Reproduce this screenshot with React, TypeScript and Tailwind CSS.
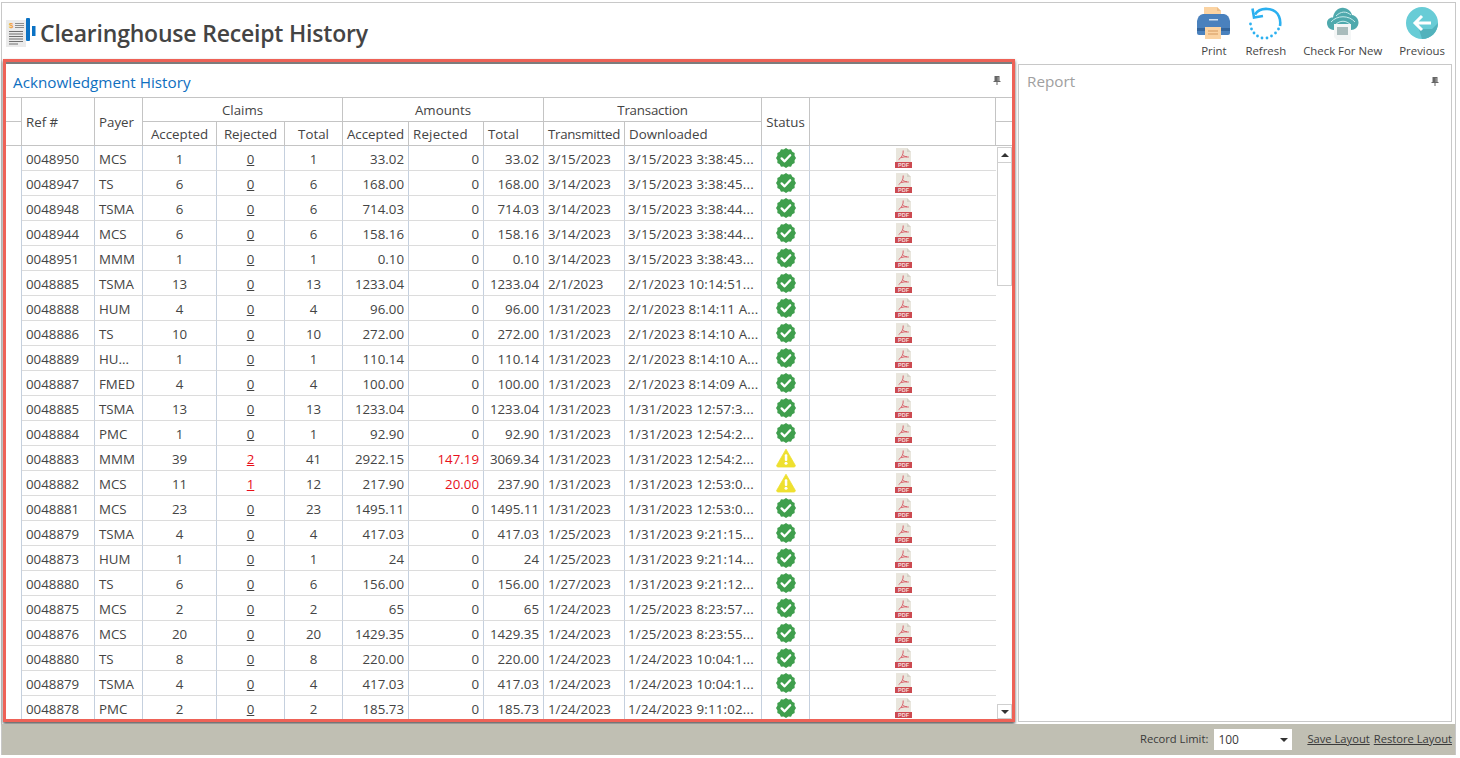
import React from "react";

type Row = [string, string, string, string, string, string, string, string, string, string];
const rows: Row[] = [
  ["0048950","MCS","1","0","1","33.02","0","33.02","3/15/2023","3/15/2023 3:38:45..."],
  ["0048947","TS","6","0","6","168.00","0","168.00","3/14/2023","3/15/2023 3:38:45..."],
  ["0048948","TSMA","6","0","6","714.03","0","714.03","3/14/2023","3/15/2023 3:38:44..."],
  ["0048944","MCS","6","0","6","158.16","0","158.16","3/14/2023","3/15/2023 3:38:44..."],
  ["0048951","MMM","1","0","1","0.10","0","0.10","3/14/2023","3/15/2023 3:38:43..."],
  ["0048885","TSMA","13","0","13","1233.04","0","1233.04","2/1/2023","2/1/2023 10:14:51..."],
  ["0048888","HUM","4","0","4","96.00","0","96.00","1/31/2023","2/1/2023 8:14:11 A..."],
  ["0048886","TS","10","0","10","272.00","0","272.00","1/31/2023","2/1/2023 8:14:10 A..."],
  ["0048889","HU...","1","0","1","110.14","0","110.14","1/31/2023","2/1/2023 8:14:10 A..."],
  ["0048887","FMED","4","0","4","100.00","0","100.00","1/31/2023","2/1/2023 8:14:09 A..."],
  ["0048885","TSMA","13","0","13","1233.04","0","1233.04","1/31/2023","1/31/2023 12:57:3..."],
  ["0048884","PMC","1","0","1","92.90","0","92.90","1/31/2023","1/31/2023 12:54:2..."],
  ["0048883","MMM","39","2","41","2922.15","147.19","3069.34","1/31/2023","1/31/2023 12:54:2..."],
  ["0048882","MCS","11","1","12","217.90","20.00","237.90","1/31/2023","1/31/2023 12:53:0..."],
  ["0048881","MCS","23","0","23","1495.11","0","1495.11","1/31/2023","1/31/2023 12:53:0..."],
  ["0048879","TSMA","4","0","4","417.03","0","417.03","1/25/2023","1/31/2023 9:21:15..."],
  ["0048873","HUM","1","0","1","24","0","24","1/25/2023","1/31/2023 9:21:14..."],
  ["0048880","TS","6","0","6","156.00","0","156.00","1/27/2023","1/31/2023 9:21:12..."],
  ["0048875","MCS","2","0","2","65","0","65","1/24/2023","1/25/2023 8:23:57..."],
  ["0048876","MCS","20","0","20","1429.35","0","1429.35","1/24/2023","1/25/2023 8:23:55..."],
  ["0048880","TS","8","0","8","220.00","0","220.00","1/24/2023","1/24/2023 10:04:1..."],
  ["0048879","TSMA","4","0","4","417.03","0","417.03","1/24/2023","1/24/2023 10:04:1..."],
  ["0048878","PMC","2","0","2","185.73","0","185.73","1/24/2023","1/24/2023 9:11:02..."],
];

const badgePoints = (() => {
  const p: string[] = [];
  for (let i = 0; i < 24; i++) {
    const r = i % 2 === 0 ? 10 : 8.9;
    const a = (i * Math.PI) / 12;
    p.push(`${(10 + r * Math.cos(a)).toFixed(2)},${(10 + r * Math.sin(a)).toFixed(2)}`);
  }
  return p.join(" ");
})();

function CheckBadge() {
  return (
    <svg width="20" height="20" viewBox="0 0 20 20">
      <polygon points={badgePoints} fill="#3f9f4d" />
      <path d="M5.6 10.4l3 2.9 5.6-6" fill="none" stroke="#fff" strokeWidth="2.3" strokeLinecap="round" strokeLinejoin="round" />
    </svg>
  );
}

function Warn() {
  return (
    <svg width="20" height="20" viewBox="0 0 20 20">
      <path d="M10 1.2 L19.2 17.2 Q19.6 19 18 19 L2 19 Q0.4 19 0.8 17.2 Z" fill="#eee02f" stroke="#eee02f" strokeWidth="0.8" strokeLinejoin="round" />
      <rect x="8.8" y="6.2" width="2.5" height="6.8" rx="1" fill="#fff" />
      <circle cx="10" cy="15.3" r="1.5" fill="#fff" />
    </svg>
  );
}

function Pdf() {
  return (
    <svg width="17" height="20" viewBox="0 0 17 20">
      <path d="M1 0H12L16 4V14H1Z" fill="#e9e6dd" />
      <path d="M12 0L16 4H12Z" fill="#d6d3c8" />
      <path d="M8.2 2.5C8.6 6 6.5 10 3.6 11.6M8.2 7.4C9.8 8.6 11.8 9.2 13.8 9M6.2 9.6C8.2 9 10 8.7 12 8.7" fill="none" stroke="#d9606a" strokeWidth="1" />
      <rect x="0" y="14" width="17" height="6" fill="#cc4a50" />
      <text x="8.5" y="19" textAnchor="middle" fontSize="5.5" fontWeight="700" fill="#f4dcdc" fontFamily="'Liberation Sans',sans-serif">PDF</text>
    </svg>
  );
}

function Pin() {
  return (
    <svg width="8" height="9" viewBox="0 0 8 9">
      <path d="M1.5 0H6.5V5H7.500V6H4.500V9H3.500V6H0.500V5H1.500Z" fill="#666" />
      <rect x="4.6" y="1" width="1" height="4" fill="#aaa" />
    </svg>
  );
}

function TitleIcon() {
  return (
    <svg width="30" height="30" viewBox="0 0 30 30">
      <path d="M0 2H20V29H0Z" fill="#ebebeb" />
      <text x="3" y="10" fontSize="8" fontWeight="700" fill="#f2a33a" fontFamily="'Liberation Sans',sans-serif">$</text>
      <path d="M9 5.500H18M9 7.500H18M9 9.500H18" stroke="#8d8d8d" strokeWidth="1" />
      <path d="M3 13.500H17M3 16H17M3 18.500H17M3 21H17M3 23.500H17M3 26H12" stroke="#707070" strokeWidth="1" />
      <rect x="20" y="0" width="4" height="23" rx="1" fill="#0b72c4" />
      <rect x="26" y="8" width="3.500" height="10" fill="#0b72c4" />
    </svg>
  );
}

function PrintIcon() {
  return (
    <svg width="33" height="33" viewBox="0 0 33 33">
      <path d="M7 0H20L24 4V14H7Z" fill="#fbd3a2" />
      <path d="M20 0L24 4H20Z" fill="#eebd87" />
      <path d="M6 7H27Q32 8 33 14V26Q33 28 31 28H2Q0 28 0 26V14Q1 8 6 7Z" fill="#4a81bd" />
      <rect x="0" y="21" width="33" height="3" fill="#33659c" />
      <rect x="12" y="12" width="9" height="1.500" fill="#cfe0f0" />
      <path d="M8 20H24V32H8Z" fill="#fbd3a2" />
      <path d="M11 24H21M11 27H21" stroke="#d69a5e" strokeWidth="1.200" />
    </svg>
  );
}

function RefreshIcon() {
  const dots: [number, number][] = [[1.5,17],[2.5,22],[5,26],[8.5,29],[13,31],[18,31],[22.5,29],[26.5,26],[29.5,22]];
  return (
    <svg width="33" height="33" viewBox="0 0 33 33">
      <path d="M6 7.500C11-0.500 26 0 30 9.500C31.500 13 31.500 16 31 19" fill="none" stroke="#2bb0f0" strokeWidth="2.600" />
      <path d="M3.500 1.500L5 10.500L14 9" fill="none" stroke="#2bb0f0" strokeWidth="2.600" />
      {dots.map(([x, y], i) => (
        <circle key={i} cx={x} cy={y} r="1.400" fill="#2bb0f0" />
      ))}
    </svg>
  );
}

function CloudIcon() {
  return (
    <svg width="32" height="33" viewBox="0 0 32 33">
      <path d="M7 23C2 23 0 19 0 16C0 12.500 3 10 6 10.500C7 4 12 0 17 1C21 1.500 24 4 25 8C29 8.500 31.500 12 31.500 15.500C31.500 20 28 23 24 23Z" fill="#4fa9ad" />
      <path d="M4 15C10 8 22 8 28 15M8 18C13 13 19 13 24 18M9 9C14 4 19 4 24 8" fill="none" stroke="#c9ecec" strokeWidth="1" />
      <path d="M7 17H24V33H10L7 30Z" fill="#f4f6f6" />
      <rect x="10" y="20" width="11" height="8" fill="#a9bcbc" />
    </svg>
  );
}

function PrevIcon() {
  return (
    <svg width="32" height="32" viewBox="0 0 32 32">
      <circle cx="16" cy="16" r="16" fill="#68ccd6" />
      <path d="M11 16L17 22H26L32 16C32 25 25 32 16 32Z" fill="#52b2bc" />
      <path d="M16 9L9 16L16 23M9.500 16H25" fill="none" stroke="#fff" strokeWidth="3" />
    </svg>
  );
}

const hCell = "border-r border-b border-[#c4c4c4] flex items-center justify-center pt-[2px]";
const bLine = "border-r border-b-[1px] border-r-[#c5d0de] border-b-[#dcdcdc] h-[25px] flex items-center";
const bText = `${bLine} pt-[1px]`;

function ToolBtn({ icon, label }: { icon: React.ReactNode; label: string }) {
  return (
    <div className="flex flex-col items-center">
      <div className="h-[36px] flex items-start">{icon}</div>
      <span className="text-[11.4px] leading-[16px] text-[#444] whitespace-nowrap">{label}</span>
    </div>
  );
}

export default function App() {
  return (
    <div className="w-[1460px] h-[758px] bg-white overflow-hidden pt-[2px] pl-[1px] font-['Open_Sans',sans-serif] text-[#444]">
      <div className="w-[1455px] h-[753px] border-t border-l border-r border-[#c8c8c8] flex flex-col">
        <div className="h-[56px] flex items-start justify-between">
          <div className="flex items-center pl-[4px] pt-[14px]">
            <TitleIcon />
            <span className="ml-[4px] text-[23px] leading-[32px] font-semibold text-[#444] tracking-[-0.2px] whitespace-nowrap">Clearinghouse Receipt History</span>
          </div>
          <div className="flex items-start pr-[10px] pt-[4px]">
            <ToolBtn icon={<PrintIcon />} label="Print" />
            <div className="ml-[15px]"><ToolBtn icon={<RefreshIcon />} label="Refresh" /></div>
            <div className="ml-[17px]"><ToolBtn icon={<CloudIcon />} label="Check For New" /></div>
            <div className="ml-[17px]"><ToolBtn icon={<PrevIcon />} label="Previous" /></div>
          </div>
        </div>

        <div className="flex items-start h-[665px]">
          <div className="ml-[1px] w-[1012px] h-[663px] border-[3px] border-[#ee6257] bg-white shadow-[0_2px_3px_rgba(0,0,0,0.65)] flex flex-col overflow-hidden">
            <div className="h-[2px] bg-[#7d7d7d] shrink-0" />
            <div className="h-[33px] shrink-0 flex items-center justify-between pl-[7px] pr-[11px]">
              <span className="text-[15.25px] pt-[4px] text-[#0f6fc0]">Acknowledgment History</span>
              <Pin />
            </div>
            <div className="grid grid-cols-[16px_73px_48px_74px_68px_58px_66px_75px_60px_81px_137px_48px_186px_16px] grid-rows-[24px_24px] border-t border-[#c4c4c4] text-[13.3px] shrink-0 h-[49px]">
              <div className={hCell} />
              <div className={`${hCell} row-span-2 !justify-start pl-[4px]`}>Ref #</div>
              <div className={`${hCell} row-span-2 !justify-start pl-[4px]`}>Payer</div>
              <div className={`${hCell} col-span-3`}>Claims</div>
              <div className={`${hCell} col-span-3`}>Amounts</div>
              <div className={`${hCell} col-span-2`}><span className="tracking-[-0.2px]">Transaction</span></div>
              <div className={`${hCell} row-span-2`}>Status</div>
              <div className={`${hCell} row-span-2`} />
              <div className="border-b border-[#c4c4c4]" />
              <div className={hCell} />
              <div className={hCell}>Accepted</div>
              <div className={hCell}>Rejected</div>
              <div className={hCell}>Total</div>
              <div className={hCell}>Accepted</div>
              <div className={`${hCell} !justify-start pl-[4px]`}><span className="tracking-[0.2px]">Rejected</span></div>
              <div className={`${hCell} !justify-start pl-[4px]`}>Total</div>
              <div className={`${hCell} !justify-start pl-[4px]`}><span className="tracking-[-0.3px]">Transmitted</span></div>
              <div className={`${hCell} !justify-start pl-[4px]`}>Downloaded</div>
              <div className="border-b border-[#c4c4c4]" />
            </div>
            <div className="flex items-start flex-1 min-h-0 overflow-hidden">
              <div className="w-[990px] shrink-0">
                {rows.map((r, i) => {
                  const bad = r[3] !== "0";
                  return (
                    <div key={i} className="grid grid-cols-[16px_73px_48px_74px_68px_58px_66px_75px_60px_81px_137px_48px_186px] text-[13.3px] leading-[18px]">
                      <div className="border-r border-r-[#c5d0de] h-[25px]" />
                      <div className={`${bText} pl-[4px]`}>{r[0]}</div>
                      <div className={`${bText} pl-[4px]`}>{r[1]}</div>
                      <div className={`${bText} justify-center`}>{r[2]}</div>
                      <div className={`${bText} justify-center`}>
                        <span className={`underline ${bad ? "text-[#e8101a]" : ""}`}>{r[3]}</span>
                      </div>
                      <div className={`${bText} justify-center`}>{r[4]}</div>
                      <div className={`${bText} justify-end pr-[4px]`}>{r[5]}</div>
                      <div className={`${bText} justify-end pr-[4px] ${bad ? "text-[#e8101a]" : ""}`}>{r[6]}</div>
                      <div className={`${bText} justify-end pr-[4px]`}>{r[7]}</div>
                      <div className={`${bText} pl-[4px]`}>{r[8]}</div>
                      <div className={`${bText} pl-[3px] whitespace-nowrap overflow-hidden tracking-[0.2px]`}>{r[9]}</div>
                      <div className={`${bLine} justify-center`}>{bad ? <Warn /> : <CheckBadge />}</div>
                      <div className="border-b border-b-[#dcdcdc] h-[25px] flex items-center justify-center"><Pdf /></div>
                    </div>
                  );
                })}
              </div>
              <div className="w-[16px] shrink-0 h-[573px] pl-[1px] pt-[1px] flex flex-col">
                <div className="w-[15px] h-[139px] border border-[#cfcfcf] flex flex-col">
                  <div className="h-[15px] border-b border-[#cfcfcf] flex items-center justify-center">
                    <div className="w-0 h-0 border-l-[4px] border-r-[4px] border-b-[4px] border-l-transparent border-r-transparent border-b-[#333]" />
                  </div>
                </div>
                <div className="flex-1" />
                <div className="w-[15px] h-[15px] border border-[#cfcfcf] flex items-center justify-center">
                  <div className="w-0 h-0 border-l-[4px] border-r-[4px] border-t-[4px] border-l-transparent border-r-transparent border-t-[#333]" />
                </div>
              </div>
            </div>
          </div>

          <div className="ml-[3px] mt-[5px] w-[434px] h-[658px] border border-[#c8c8c8] bg-white flex items-start justify-between pl-[8px] pr-[12px] pt-[5px]">
            <span className="text-[15.25px] leading-[22px] text-[#a0a0a0]">Report</span>
            <div className="mt-[7px]"><Pin /></div>
          </div>
        </div>

        <div className="h-[31px] bg-[#c0bfb3] flex items-center justify-end pr-[3px] text-[11.2px] text-[#3a3a3a]">
          <span>Record Limit:</span>
          <div className="ml-[6px] w-[78px] h-[21px] bg-white flex items-center justify-between pl-[4px] pr-[4px] text-[12px]">
            <span>100</span>
            <div className="w-0 h-0 border-l-[4px] border-r-[4px] border-t-[4px] border-l-transparent border-r-transparent border-t-[#333]" />
          </div>
          <span className="ml-[15px] underline">Save Layout</span>
          <span className="ml-[4px] underline">Restore Layout</span>
        </div>
      </div>
    </div>
  );
}
